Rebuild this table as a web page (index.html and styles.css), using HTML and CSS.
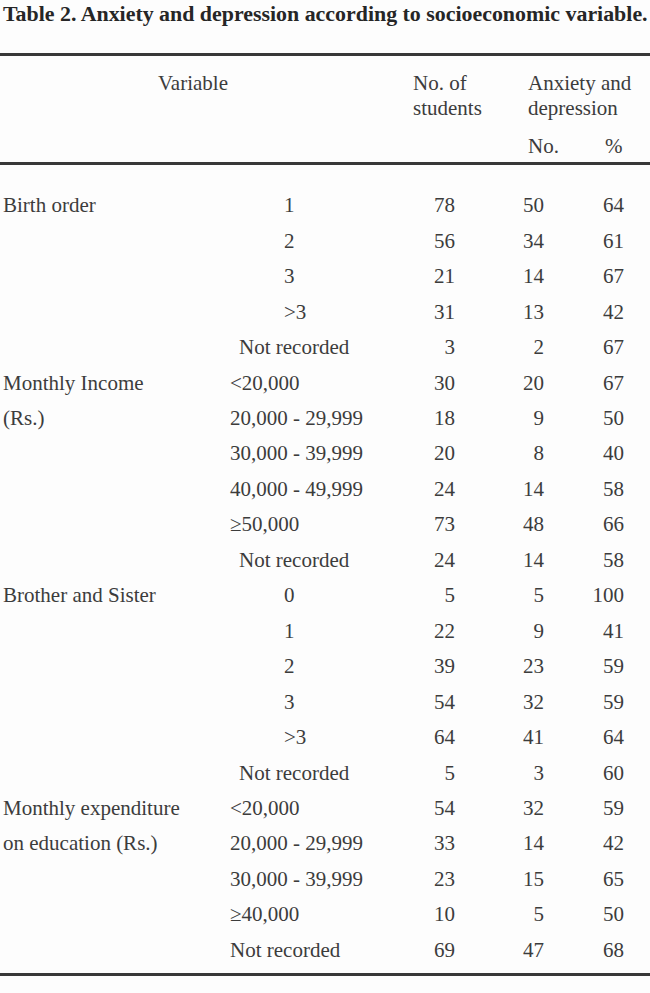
FILE: index.html
```html
<!DOCTYPE html>
<html lang="en">
<head>
<meta charset="utf-8">
<title>Table 2</title>
<link rel="stylesheet" href="styles.css">
</head>
<body>
<div class="page">
  <div class="caption">Table 2. Anxiety and depression according to socioeconomic variable.</div>
  <table class="data">
    <colgroup>
      <col class="c1"><col class="c2"><col class="c3"><col class="c4"><col class="c5">
    </colgroup>
    <thead>
      <tr class="h1">
        <th class="hv" colspan="2" rowspan="2">Variable</th>
        <th class="hn" rowspan="2">No. of<br>students</th>
        <th class="ha" colspan="2">Anxiety and<br>depression</th>
      </tr>
      <tr class="h2">
        <th class="hno">No.</th>
        <th class="hpc">%</th>
      </tr>
    </thead>
    <tbody>
      <tr><td class="v">Birth order</td><td class="s d">1</td><td class="n">78</td><td class="a">50</td><td class="p">64</td></tr>
      <tr><td class="v"></td><td class="s d">2</td><td class="n">56</td><td class="a">34</td><td class="p">61</td></tr>
      <tr><td class="v"></td><td class="s d">3</td><td class="n">21</td><td class="a">14</td><td class="p">67</td></tr>
      <tr><td class="v"></td><td class="s d">&gt;3</td><td class="n">31</td><td class="a">13</td><td class="p">42</td></tr>
      <tr><td class="v"></td><td class="s nr">Not recorded</td><td class="n">3</td><td class="a">2</td><td class="p">67</td></tr>

      <tr><td class="v">Monthly Income</td><td class="s">&lt;20,000</td><td class="n">30</td><td class="a">20</td><td class="p">67</td></tr>
      <tr><td class="v">(Rs.)</td><td class="s">20,000 - 29,999</td><td class="n">18</td><td class="a">9</td><td class="p">50</td></tr>
      <tr><td class="v"></td><td class="s">30,000 - 39,999</td><td class="n">20</td><td class="a">8</td><td class="p">40</td></tr>
      <tr><td class="v"></td><td class="s">40,000 - 49,999</td><td class="n">24</td><td class="a">14</td><td class="p">58</td></tr>
      <tr><td class="v"></td><td class="s">&ge;50,000</td><td class="n">73</td><td class="a">48</td><td class="p">66</td></tr>
      <tr><td class="v"></td><td class="s nr">Not recorded</td><td class="n">24</td><td class="a">14</td><td class="p">58</td></tr>

      <tr><td class="v">Brother and Sister</td><td class="s d">0</td><td class="n">5</td><td class="a">5</td><td class="p">100</td></tr>
      <tr><td class="v"></td><td class="s d">1</td><td class="n">22</td><td class="a">9</td><td class="p">41</td></tr>
      <tr><td class="v"></td><td class="s d">2</td><td class="n">39</td><td class="a">23</td><td class="p">59</td></tr>
      <tr><td class="v"></td><td class="s d">3</td><td class="n">54</td><td class="a">32</td><td class="p">59</td></tr>
      <tr><td class="v"></td><td class="s d">&gt;3</td><td class="n">64</td><td class="a">41</td><td class="p">64</td></tr>
      <tr><td class="v"></td><td class="s nr">Not recorded</td><td class="n">5</td><td class="a">3</td><td class="p">60</td></tr>

      <tr><td class="v">Monthly expenditure</td><td class="s">&lt;20,000</td><td class="n">54</td><td class="a">32</td><td class="p">59</td></tr>
      <tr><td class="v">on education (Rs.)</td><td class="s">20,000 - 29,999</td><td class="n">33</td><td class="a">14</td><td class="p">42</td></tr>
      <tr><td class="v"></td><td class="s">30,000 - 39,999</td><td class="n">23</td><td class="a">15</td><td class="p">65</td></tr>
      <tr><td class="v"></td><td class="s">&ge;40,000</td><td class="n">10</td><td class="a">5</td><td class="p">50</td></tr>
      <tr><td class="v"></td><td class="s">Not recorded</td><td class="n">69</td><td class="a">47</td><td class="p">68</td></tr>
    </tbody>
  </table>
</div>
</body>
</html>
```

FILE: styles.css
```css
html, body {
  margin: 0;
  padding: 0;
  background: #fdfdfd;
}

.page {
  width: 650px;
  font-family: "Liberation Serif", "Times New Roman", serif;
  color: #3c3c3c;
}

.caption {
  margin: 2px 0 27px 3px;
  height: 24px;
  line-height: 24px;
  font-size: 21.9px;
  font-weight: bold;
  color: #262626;
  white-space: nowrap;
}

.data {
  width: 650px;
  table-layout: fixed;
  border-collapse: separate;
  border-spacing: 0;
  border-top: 3px solid #383838;
  border-bottom: 3px solid #383838;
  font-size: 21px;
}

.c1 { width: 230px; }
.c2 { width: 170px; }
.c3 { width: 90px; }
.c4 { width: 80px; }
.c5 { width: 80px; }

th {
  font-weight: normal;
  text-align: left;
  vertical-align: top;
  line-height: 25px;
  padding: 0;
  white-space: nowrap;
}

.h1 th { padding-top: 14.5px; }
.h2 th { padding-top: 13px; padding-bottom: 3.5px; }

.hv { padding-left: 158px; }
.hn { padding-left: 13px; }
.ha { padding-left: 38px; }
.hno { padding-left: 38px; }
.hpc { padding-left: 35px; }

td {
  padding: 0;
  line-height: 35.45px;
  white-space: nowrap;
  vertical-align: top;
}

tbody tr:first-child td {
  border-top: 3px solid #383838;
  padding-top: 23.3px;
}

tbody tr:last-child td {
  padding-bottom: 4.8px;
}

.v { padding-left: 3px; }
.s { text-align: left; }
.d { padding-left: 54px; }
.nr { padding-left: 9px; }
.n { text-align: right; padding-right: 35px; }
.a { text-align: right; padding-right: 26px; }
.p { text-align: right; padding-right: 26px; }
```
